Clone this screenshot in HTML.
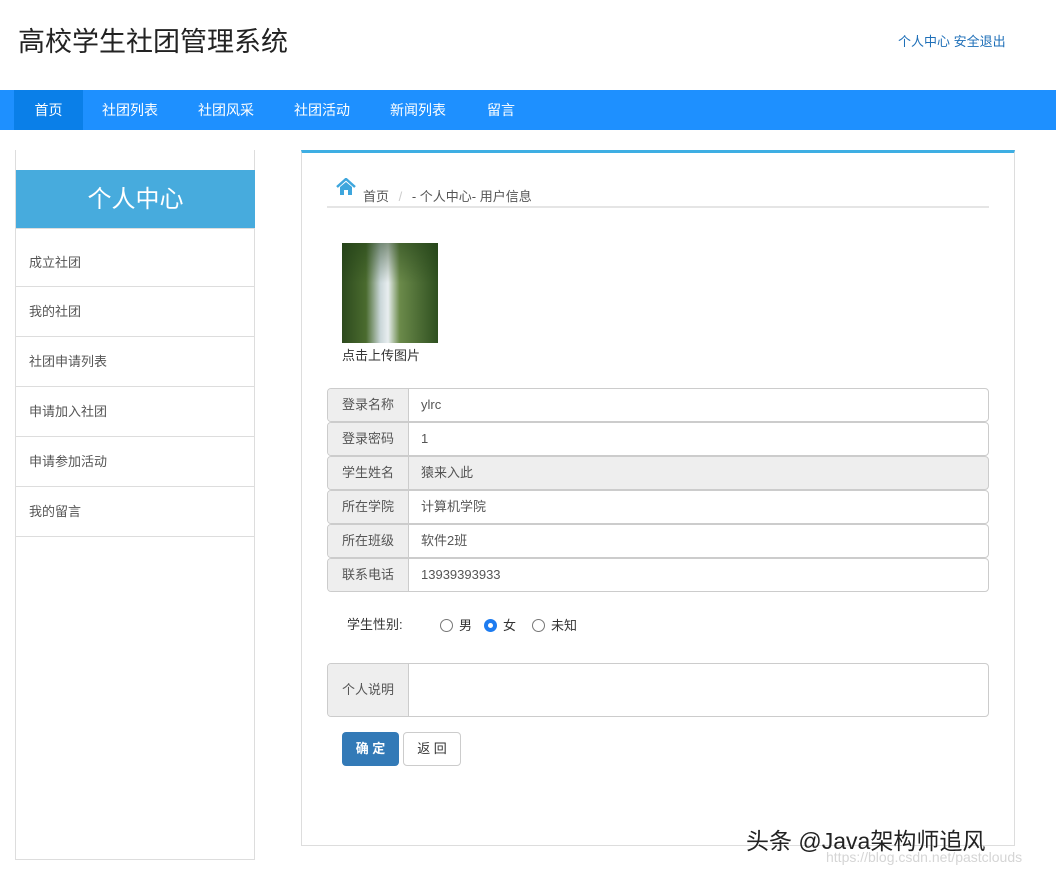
<!DOCTYPE html>
<html><head><meta charset="utf-8"><style>
*{box-sizing:border-box;margin:0;padding:0}
body{width:1056px;height:875px;background:#fff;font-family:"Liberation Sans","Noto Sans CJK SC",sans-serif;font-size:13px;color:#333;position:relative;overflow:hidden}
.a{position:absolute}
.nav{top:90px;left:0;width:1056px;height:40px;background:#1e90ff}
.nav span{position:absolute;top:0;height:40px;line-height:40px;color:#fff;font-size:14px}
.side{left:15px;top:150px;width:240px;height:710px;border:1px solid #ddd;border-top:none}
.side .h{position:absolute;top:20px;left:0;width:239px;height:58px;background:#47abdd;color:#fff;font-size:24px;text-align:center;line-height:60px}
.side .i{position:absolute;left:0;width:239px;height:50px;border-bottom:1px solid #ddd;line-height:50px;padding-left:13px;color:#555}
.main{left:301px;top:150px;width:714px;height:696px;border:1px solid #ddd;border-top:3px solid #3eaee3}
.row{position:absolute;left:327px;width:662px;height:34px;border:1px solid #ccc;border-radius:4px;overflow:hidden;background:#fff}
.row .l{position:absolute;left:0;top:0;width:81px;height:100%;background:#eee;border-right:1px solid #ccc;text-align:center;line-height:32px;color:#555}
.row .v{position:absolute;left:93px;top:0;line-height:32px;color:#555}
.rad{display:inline-block;width:13px;height:13px;border:1px solid #777;border-radius:50%;vertical-align:-2px;margin-right:6px}
</style></head><body>
<div class="a" style="left:18px;top:20px;font-size:27px;color:#222">高校学生社团管理系统</div>
<div class="a" style="left:898px;top:31px;font-size:13px;color:#1e6fb8">个人中心 安全退出</div>
<div class="a nav">
<span style="left:14px;width:69px;background:#0a7fe8;text-align:center">首页</span>
<span style="left:102px">社团列表</span><span style="left:198px">社团风采</span><span style="left:294px">社团活动</span><span style="left:390px">新闻列表</span><span style="left:487px">留言</span>
</div>
<div class="a side">
<div class="h">个人中心</div>
<div class="i" style="top:78px;height:59px;line-height:68px;border-top:1px solid #ddd">成立社团</div>
<div class="i" style="top:137px">我的社团</div>
<div class="i" style="top:187px">社团申请列表</div>
<div class="i" style="top:237px">申请加入社团</div>
<div class="i" style="top:287px">申请参加活动</div>
<div class="i" style="top:337px">我的留言</div>
</div>
<div class="a main"></div>
<svg class="a" style="left:336px;top:178px" width="20" height="18" viewBox="0 0 20 18"><path d="M1 9 L10 1 L19 9" stroke="#3ea6dd" stroke-width="2.5" fill="none"/><path d="M4 9 V17 H8 V12 H12 V17 H16 V9 L10 4Z" fill="#3ea6dd"/></svg>
<div class="a" style="left:363px;top:186px;color:#555">首页 <span style="color:#ccc;margin:0 6px">/</span> - 个人中心- 用户信息</div>
<div class="a" style="left:327px;top:206px;width:662px;height:2px;background:#e5e5e5"></div>
<div class="a" style="left:342px;top:243px;width:96px;height:100px;background:linear-gradient(180deg,rgba(30,60,20,0.5) 0%,rgba(0,0,0,0) 40%),linear-gradient(90deg,#2d4a1e 0%,#4a6b2e 25%,#c9d6d8 40%,#e8eef0 48%,#6b8a4a 60%,#2f5020 100%)"></div>
<div class="a" style="left:342px;top:345px;color:#333">点击上传图片</div>
<div class="row" style="top:388px"><div class="l">登录名称</div><div class="v">ylrc</div></div>
<div class="row" style="top:422px"><div class="l">登录密码</div><div class="v">1</div></div>
<div class="row" style="top:456px;background:#eee"><div class="l">学生姓名</div><div class="v">猿来入此</div></div>
<div class="row" style="top:490px"><div class="l">所在学院</div><div class="v">计算机学院</div></div>
<div class="row" style="top:524px"><div class="l">所在班级</div><div class="v">软件2班</div></div>
<div class="row" style="top:558px"><div class="l">联系电话</div><div class="v">13939393933</div></div>
<div class="a" style="left:347px;top:614px">学生性别:</div>
<div class="a" style="left:440px;top:615px"><span class="rad"></span>男<span class="rad" style="border:4px solid #1e7cf0;margin-left:12px"></span>女<span class="rad" style="margin-left:16px"></span>未知</div>
<div class="row" style="top:663px;height:54px"><div class="l" style="line-height:52px">个人说明</div></div>
<div class="a" style="left:342px;top:732px;width:57px;height:34px;background:#337ab7;border-radius:4px;color:#fff;text-align:center;line-height:34px;font-weight:bold">确 定</div>
<div class="a" style="left:403px;top:732px;width:58px;height:34px;border:1px solid #ccc;border-radius:4px;text-align:center;line-height:32px">返 回</div>
<div class="a" style="left:746px;top:822px;font-size:23px;color:#222">头条 @Java架构师追风</div>
<div class="a" style="left:826px;top:849px;font-size:14px;color:#d5d5d5">https://blog.csdn.net/pastclouds</div>
</body></html>
